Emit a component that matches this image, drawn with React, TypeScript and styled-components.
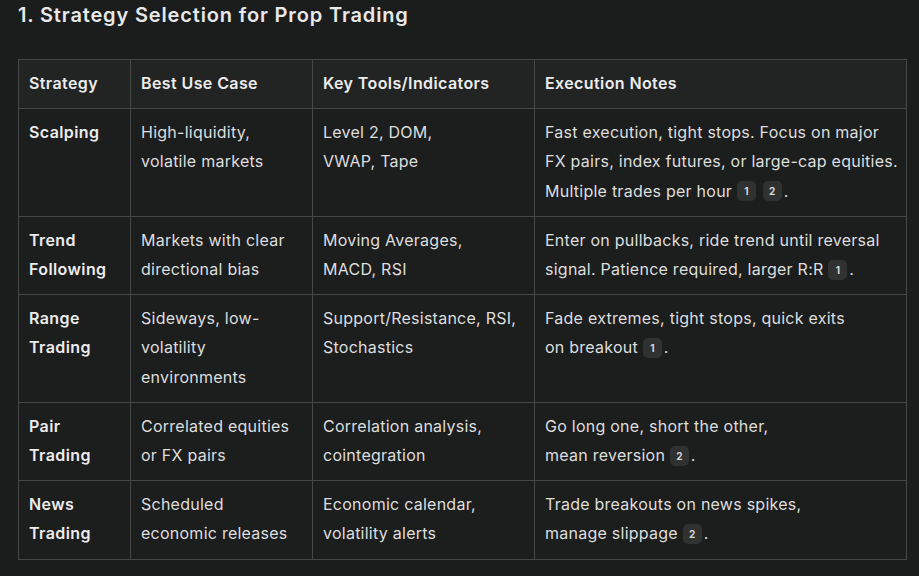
import React from "react";
import styled, { createGlobalStyle } from "styled-components";

const Global = createGlobalStyle`
  html, body { margin: 0; padding: 0; background: #1b1c1c; }
  body { font-family: Inter, "Liberation Sans", Arial, sans-serif; color: #e6e6e6; }
`;

const Page = styled.div`
  padding: 0 13px 0 18px;
  width: 919px;
  height: 576px;
  box-sizing: border-box;
  overflow: hidden;
`;

const Title = styled.h2`
  margin: 0;
  padding-top: 2px;
  height: 59px;
  box-sizing: border-box;
  font-size: 20px;
  line-height: 26px;
  font-weight: 600;
  letter-spacing: 0.85px;
  color: #e8e8e8;
`;

const Table = styled.table`
  border-collapse: collapse;
  width: 888px;
  table-layout: fixed;
  font-size: 16px;
  line-height: 29.2px;
`;

const Col = styled.col<{ $w: number }>`
  width: ${(p) => p.$w}px;
`;

const Th = styled.th`
  background: #222323;
  border: 1px solid #464747;
  padding: 9px 10px 10px;
  text-align: left;
  font-weight: 600;
  letter-spacing: 0.4px;
  color: #ececec;
  vertical-align: top;
`;

const Td = styled.td<{ $head?: boolean }>`
  background: #1c1d1d;
  border: 1px solid #464747;
  padding: 9px 10px 10px;
  vertical-align: top;
  white-space: nowrap;
  font-weight: ${(p) => (p.$head ? 600 : 400)};
  letter-spacing: ${(p) => (p.$head ? "0.4px" : "0.25px")};
  color: ${(p) => (p.$head ? "#ececec" : "#dedede")};
`;

const Cite = styled.span`
  display: inline-block;
  width: 19px;
  height: 20px;
  margin: 0 2px 0 0;
  border-radius: 5px;
  background: #303131;
  color: #d6d6d6;
  font-size: 10px;
  font-weight: 700;
  line-height: 20px;
  letter-spacing: 0;
  text-align: center;
  vertical-align: middle;
  position: relative;
  top: -1px;
`;

const Cites: React.FC<{ n: number[] }> = ({ n }) => (
  <>
    {" "}
    {n.map((x, i) => (
      <React.Fragment key={i}>
        {i > 0 && " "}
        <Cite>{x}</Cite>
      </React.Fragment>
    ))}
  </>
);

const cols = [112, 182, 222, 372];

export default function App() {
  return (
    <>
      <Global />
      <Page>
        <Title>1. Strategy Selection for Prop Trading</Title>
        <Table>
          <colgroup>
            {cols.map((w, i) => (
              <Col key={i} $w={w} />
            ))}
          </colgroup>
          <thead>
            <tr>
              <Th>Strategy</Th>
              <Th>Best Use Case</Th>
              <Th>Key Tools/Indicators</Th>
              <Th>Execution Notes</Th>
            </tr>
          </thead>
          <tbody>
            <tr>
              <Td $head>Scalping</Td>
              <Td>High-liquidity,<br />volatile markets</Td>
              <Td>Level 2, DOM,<br />VWAP, Tape</Td>
              <Td>
                Fast execution, tight stops. Focus on major<br />FX pairs, index futures, or large-cap equities.<br />Multiple trades per hour<Cites n={[1, 2]} />.
              </Td>
            </tr>
            <tr>
              <Td $head>Trend<br />Following</Td>
              <Td>Markets with clear<br />directional bias</Td>
              <Td>Moving Averages,<br />MACD, RSI</Td>
              <Td>
                Enter on pullbacks, ride trend until reversal<br />signal. Patience required, larger R:R<Cites n={[1]} />.
              </Td>
            </tr>
            <tr>
              <Td $head>Range<br />Trading</Td>
              <Td>Sideways, low-<br />volatility<br />environments</Td>
              <Td>Support/Resistance, RSI,<br />Stochastics</Td>
              <Td>
                Fade extremes, tight stops, quick exits<br />on breakout<Cites n={[1]} />.
              </Td>
            </tr>
            <tr>
              <Td $head>Pair<br />Trading</Td>
              <Td>Correlated equities<br />or FX pairs</Td>
              <Td>Correlation analysis,<br />cointegration</Td>
              <Td>
                Go long one, short the other,<br />mean reversion<Cites n={[2]} />.
              </Td>
            </tr>
            <tr>
              <Td $head>News<br />Trading</Td>
              <Td>Scheduled<br />economic releases</Td>
              <Td>Economic calendar,<br />volatility alerts</Td>
              <Td>
                Trade breakouts on news spikes,<br />manage slippage<Cites n={[2]} />.
              </Td>
            </tr>
          </tbody>
        </Table>
      </Page>
    </>
  );
}
